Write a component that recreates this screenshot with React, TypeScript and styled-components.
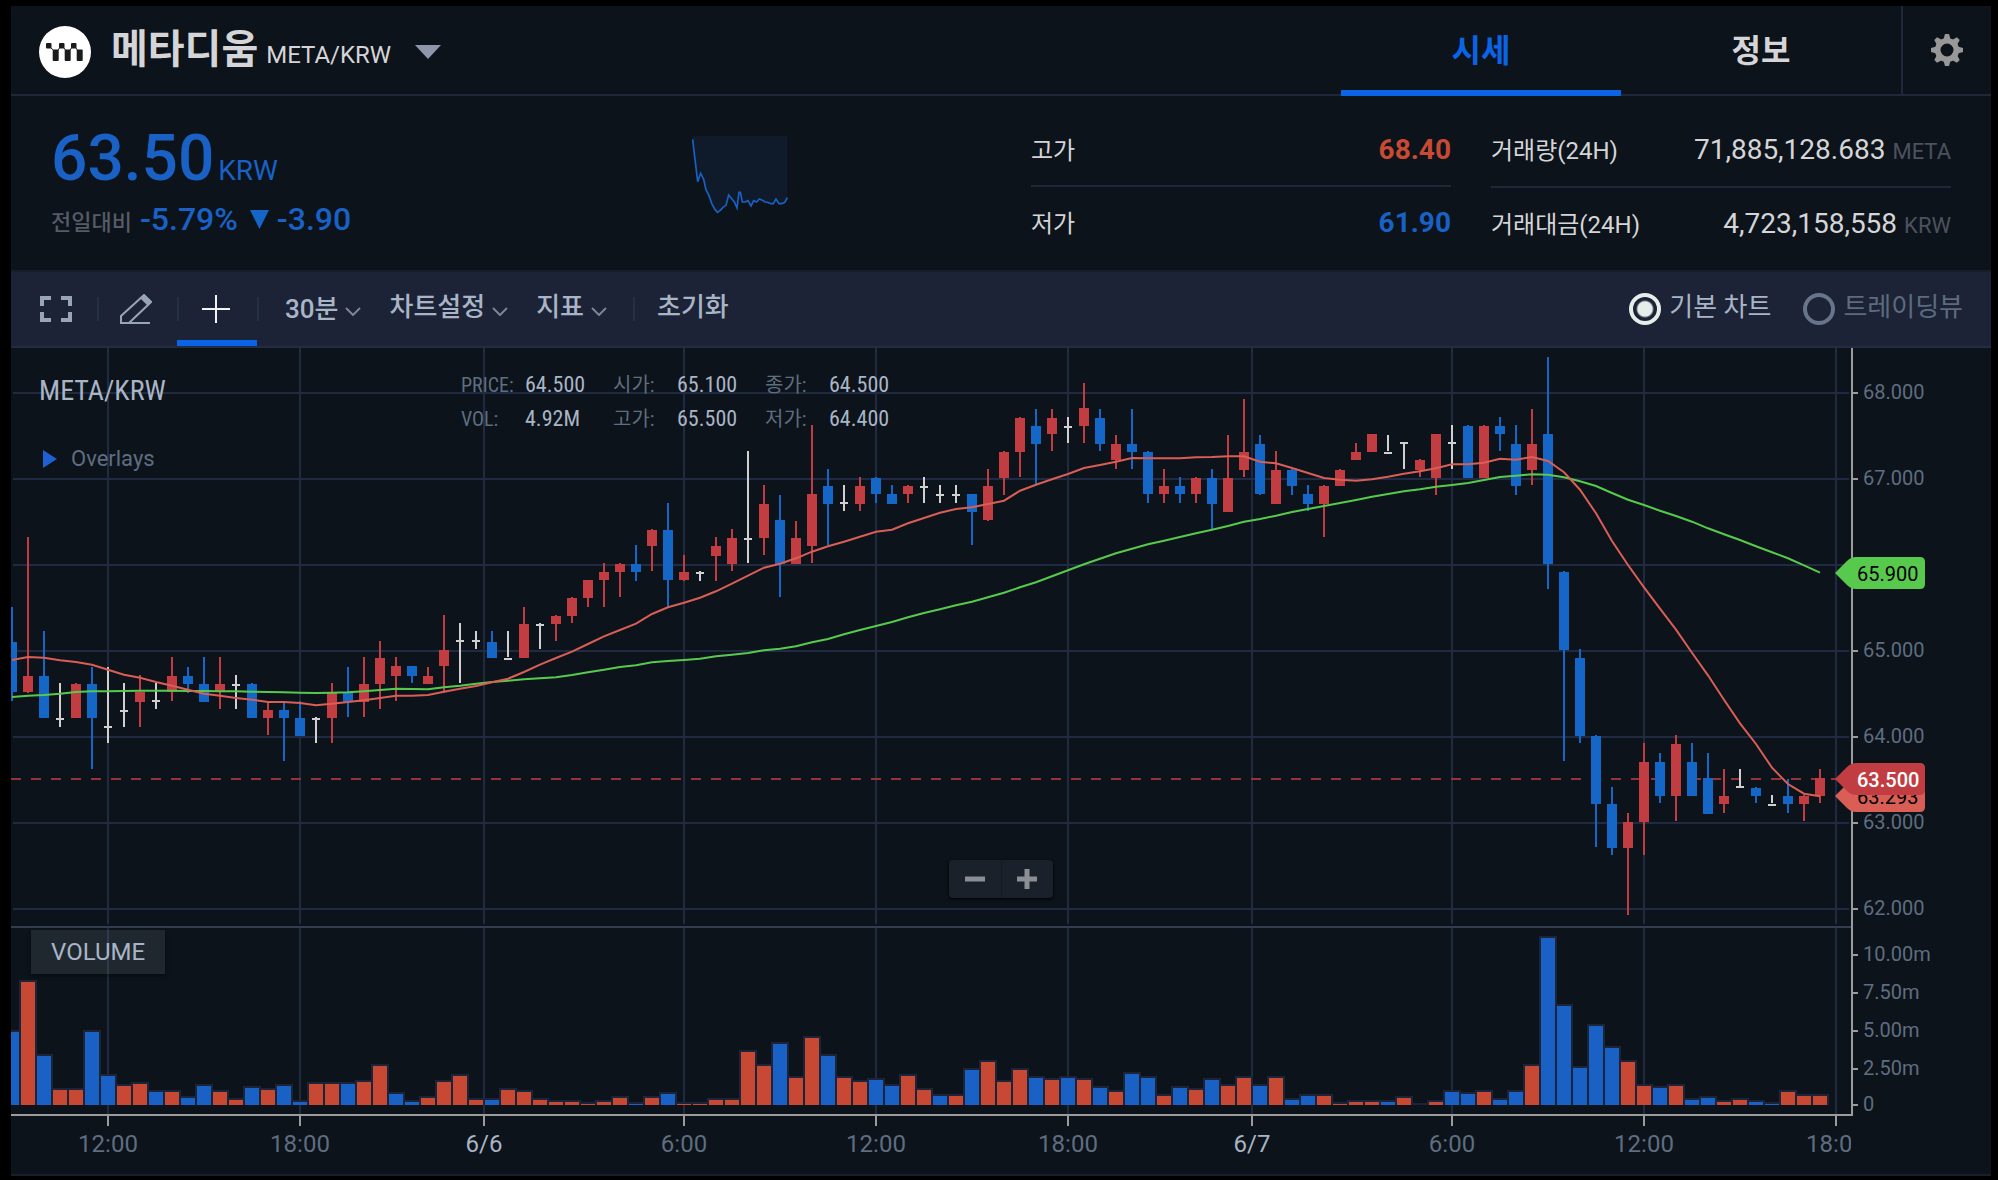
import React, { useState } from "react";
import styled, { createGlobalStyle, css } from "styled-components";

/* ---------- theme values ---------- */

const c = {
  bg: "#0c131a",
  bar: "#1c2336",
  line: "#1f273a",
  grid: "#202a42",
  axis: "#9b9b9b",
  light: "#d5d5d8",
  tool: "#a9b5c6",
  muted: "#5f6d80",
  dim: "#4c525e",
  blue: "#1961c5",
  accent: "#0b64e5",
  red: "#c84a32",
  candleUp: "#c13d42",
  candleDown: "#1466c7",
  doji: "#d0d0d0",
  maFast: "#d95e56",
  maSlow: "#57ca4e",
};

const sans = `Roboto, "Noto Sans CJK KR", sans-serif`;
const condensed = `"Roboto Condensed", Roboto, "Noto Sans CJK KR", sans-serif`;

const GlobalStyle = createGlobalStyle`
  * { box-sizing: border-box; }
  body { margin: 0; background: #000; font-family: ${sans}; color: ${c.light}; }
  h1, h2, p, dl, dd, dt { margin: 0; font-weight: 400; }
  button, select { background: none; border: 0; padding: 0; margin: 0; color: inherit; font: inherit; cursor: pointer; }
`;

/* ---------- market data ---------- */

type Kind = "r" | "b" | "w";
// kind, high, body top, body bottom, low: tenths of KRW above 60
type Candle = [Kind, number, number, number, number];

const candles: Candle[] = [
  ["b", 55, 51, 45, 44], ["r", 63, 47, 45, 45], ["b", 52, 47, 42, 42], ["w", 46, 42, 42, 41],
  ["r", 46, 46, 42, 42], ["b", 48, 46, 42, 36], ["w", 48, 41, 41, 39], ["w", 46, 43, 43, 41],
  ["r", 47, 45, 44, 41], ["w", 46, 44, 44, 43], ["r", 49, 47, 45, 44], ["b", 48, 47, 46, 45],
  ["b", 49, 46, 44, 44], ["r", 49, 46, 45, 43], ["w", 47, 46, 46, 43], ["b", 46, 46, 42, 42],
  ["r", 44, 43, 42, 40], ["b", 44, 43, 42, 37], ["b", 44, 42, 40, 40], ["w", 42, 42, 42, 39],
  ["r", 46, 45, 42, 39], ["b", 48, 45, 44, 42], ["r", 49, 46, 44, 42], ["r", 51, 49, 46, 43],
  ["r", 49, 48, 47, 44], ["b", 48, 48, 47, 46], ["r", 48, 47, 46, 46], ["r", 54, 50, 48, 45],
  ["w", 53, 51, 51, 46], ["w", 52, 51, 51, 50], ["b", 52, 51, 49, 49], ["w", 52, 49, 49, 49],
  ["r", 55, 53, 49, 49], ["w", 53, 53, 53, 50], ["r", 54, 54, 53, 51], ["r", 56, 56, 54, 53],
  ["r", 58, 58, 56, 55], ["r", 60, 59, 58, 55], ["r", 60, 60, 59, 56], ["b", 62, 60, 59, 58],
  ["r", 64, 64, 62, 59], ["b", 67, 64, 58, 55], ["r", 61, 59, 58, 58], ["w", 59, 59, 59, 58],
  ["r", 63, 62, 61, 58], ["r", 64, 63, 60, 59], ["w", 73, 63, 63, 60], ["r", 69, 67, 63, 61],
  ["b", 68, 65, 60, 56], ["r", 65, 63, 60, 60], ["r", 76, 68, 62, 60], ["b", 71, 69, 67, 62],
  ["w", 69, 67, 67, 66], ["r", 70, 69, 67, 66], ["b", 70, 70, 68, 67], ["b", 69, 68, 67, 67],
  ["r", 69, 69, 68, 67], ["w", 70, 69, 69, 67], ["w", 69, 68, 68, 67], ["w", 69, 68, 68, 67],
  ["b", 68, 68, 66, 62], ["r", 71, 69, 65, 65], ["r", 73, 73, 70, 68], ["r", 77, 77, 73, 70],
  ["b", 78, 76, 74, 69], ["r", 78, 77, 75, 73], ["w", 77, 76, 76, 74], ["r", 81, 78, 76, 74],
  ["b", 78, 77, 74, 73], ["r", 75, 74, 72, 71], ["b", 78, 74, 73, 71], ["b", 73, 73, 68, 67],
  ["r", 71, 69, 68, 67], ["b", 70, 69, 68, 67], ["r", 70, 70, 68, 67], ["b", 71, 70, 67, 64],
  ["r", 75, 70, 66, 66], ["r", 79, 73, 71, 70], ["b", 75, 74, 68, 68], ["r", 73, 71, 67, 67],
  ["b", 71, 71, 69, 68], ["b", 69, 68, 67, 66], ["r", 69, 69, 67, 63], ["r", 71, 71, 69, 69],
  ["r", 74, 73, 72, 72], ["r", 75, 75, 73, 73], ["w", 75, 73, 73, 73], ["w", 74, 74, 74, 71],
  ["r", 72, 72, 71, 70], ["r", 75, 75, 70, 68], ["w", 76, 74, 74, 71], ["b", 76, 76, 70, 70],
  ["r", 76, 76, 70, 70], ["b", 77, 76, 75, 73], ["b", 76, 74, 69, 68], ["r", 78, 74, 71, 69],
  ["b", 84, 75, 60, 57], ["b", 59, 59, 50, 37], ["b", 50, 49, 40, 39], ["b", 40, 40, 32, 27],
  ["b", 34, 32, 27, 26], ["r", 31, 30, 27, 19], ["r", 39, 37, 30, 26], ["b", 38, 37, 33, 32],
  ["r", 40, 39, 33, 30], ["b", 39, 37, 33, 33], ["b", 38, 35, 31, 31], ["r", 36, 33, 32, 31],
  ["w", 36, 34, 34, 34], ["b", 34, 34, 33, 32], ["w", 33, 32, 32, 32], ["b", 35, 33, 32, 31],
  ["r", 33, 33, 32, 30], ["r", 36, 35, 33, 32],
];

// Moving averages, one sample per candle, in thirds of a pixel
const fastAverage = [
  960, 951, 953, 961, 966, 974, 989, 1004, 1013, 1026, 1037, 1049, 1061, 1067, 1074, 1079, 1086, 1086,
  1089, 1096, 1091, 1086, 1081, 1074, 1067, 1067, 1065, 1055, 1046, 1038, 1027, 1016, 996, 974, 954, 935,
  912, 889, 870, 851, 822, 802, 788, 773, 754, 731, 707, 683, 671, 655, 635, 619, 605, 590, 575, 569, 550,
  534, 518, 507, 502, 492, 482, 452, 434, 418, 402, 384, 375, 365, 354, 355, 355, 355, 352, 351, 349, 349,
  365, 370, 384, 399, 414, 419, 422, 418, 410, 401, 394, 385, 373, 373, 368, 356, 359, 351, 363, 397, 449,
  520, 603, 675, 742, 806, 869, 938, 1006, 1079, 1150, 1212, 1283, 1332, 1361, 1369,
];
const slowAverage = [
  1071, 1067, 1065, 1061, 1056, 1054, 1054, 1053, 1052, 1052, 1052, 1053, 1053, 1054, 1054, 1055, 1056,
  1057, 1058, 1059, 1058, 1057, 1054, 1050, 1046, 1047, 1048, 1042, 1037, 1031, 1026, 1022, 1018, 1015,
  1012, 1005, 997, 989, 981, 976, 967, 963, 960, 956, 949, 944, 939, 931, 926, 919, 907, 897, 883, 870,
  858, 846, 832, 819, 808, 796, 785, 772, 758, 742, 727, 709, 691, 673, 656, 640, 626, 613, 602, 591, 580,
  569, 558, 545, 537, 527, 516, 507, 498, 489, 480, 470, 462, 454, 448, 440, 435, 429, 420, 411, 407, 403,
  404, 412, 424, 438, 459, 479, 495, 512, 528, 545, 565, 583, 600, 619, 637, 655, 676, 698,
];

const volumes = [
  73, 123, 49, 15, 15, 73, 29, 19, 21, 13, 13, 7, 19, 13, 5, 17, 15, 19, 3, 21, 21, 21, 23, 39, 11, 3, 7,
  23, 29, 5, 5, 15, 13, 5, 3, 3, 1, 3, 7, 1, 7, 11, 1, 1, 5, 5, 53, 39, 61, 27, 67, 49, 27, 23, 25, 19,
  29, 15, 9, 9, 35, 43, 23, 35, 27, 25, 27, 25, 17, 13, 31, 27, 9, 17, 15, 25, 19, 27, 19, 27, 5, 9, 9, 1,
  3, 3, 3, 7, 0, 3, 13, 11, 13, 5, 13, 39, 167, 99, 37, 79, 57, 43, 19, 17, 19, 5, 7, 3, 5, 3, 1, 13, 9, 9,
];

const volumeDown = new Set([
  0, 2, 5, 6, 9, 11, 12, 15, 17, 18, 21, 24, 25, 30, 39, 41, 48, 51, 54, 55, 58, 60, 64, 66, 68, 70, 71,
  73, 75, 78, 80, 81, 86, 90, 91, 93, 94, 96, 97, 98, 99, 100, 103, 105, 106, 109, 110,
]);

const times: [number, string, boolean?][] = [
  [97, "12:00"], [289, "18:00"], [473, "6/6", true], [673, "6:00"], [865, "12:00"],
  [1057, "18:00"], [1241, "6/7", true], [1441, "6:00"], [1633, "12:00"], [1825, "18:00"],
];

/* ---------- chart scales ---------- */

const PLOT_W = 1840;
const CHART_H = 826;
const PANE_SPLIT = 579;
const VOLUME_ZERO = 757;
const TIME_AXIS = 767;

const xOf = (i: number) => 1 + i * 16;
const yOf = (tenths: number) => 303 - (tenths - 50) * 8.6;
const snap = (y: number) => 2 * Math.round(y / 2);
const snapDown = (y: number) => 2 * Math.floor(y / 2);
const averagePoints = (list: number[]) => list.map((v, i) => `${xOf(i)},${(v / 3 - 8).toFixed(1)}`).join(" ");

/* ---------- frame and header ---------- */

const Page = styled.div`
  padding: 6px 7px 4px 11px;
`;

const Frame = styled.main`
  background: ${c.bg};
  border-bottom: 2px solid #171f2d;
`;

const Header = styled.header`
  display: flex;
  height: 90px;
  border-bottom: 2px solid ${c.line};
`;

const Brand = styled.div`
  flex: 1;
  display: flex;
  align-items: center;
  padding: 4px 0 0 28px;
`;

const Pair = styled.button`
  display: flex;
  align-items: baseline;
  gap: 8px;
  margin-left: 20px;
  line-height: 56px;
`;

const CoinName = styled.span`
  font-size: 40px;
  font-weight: 700;
`;

const Symbol = styled.span`
  font-size: 24px;
`;

const PairArrow = styled.svg`
  margin-left: 16px;
  align-self: center;
`;

const Tab = styled.button<{ $active?: boolean }>`
  width: 280px;
  margin-bottom: -2px;
  padding-bottom: 6px;
  font-size: 32px;
  font-weight: 700;
  color: ${(p) => (p.$active ? c.accent : c.light)};
  ${(p) => p.$active && css`box-shadow: inset 0 -6px ${c.accent};`}
`;

const Settings = styled.button`
  width: 90px;
  border-left: 2px solid ${c.line};
  display: grid;
  place-items: center;
`;

/* ---------- price summary ---------- */

const Summary = styled.section`
  display: grid;
  grid-template-columns: 681fr 339fr 460fr 500fr;
  height: 176px;
  border-bottom: 2px solid #171e2b;
`;

const PriceBlock = styled.div`
  padding: 31px 0 0 40px;
  color: ${c.blue};
`;

const Price = styled.p`
  display: flex;
  align-items: baseline;
  gap: 4px;
  font-size: 64px;
  line-height: 64px;
  font-weight: 500;
`;

const PriceUnit = styled.span`
  font-size: 28px;
  line-height: 28px;
  font-weight: 400;
`;

const Change = styled.p`
  display: flex;
  align-items: baseline;
  gap: 8px;
  margin-top: 8px;
  font-size: 32px;
  line-height: 40px;
  font-weight: 500;
`;

const ChangeLabel = styled.span`
  font-size: 22px;
  line-height: 28px;
  color: #555b67;
`;

const SparkBox = styled.div`
  padding-top: 40px;
`;

const Stats = styled.dl`
  padding: 18px 40px 0 0;
`;

const Stat = styled.div`
  display: flex;
  justify-content: space-between;
  align-items: baseline;
  padding: 22px 0 20px;
  line-height: 28px;
  & + & {
    border-top: 2px solid ${c.line};
  }
`;

const StatName = styled.dt`
  font-size: 24px;
`;

const StatValue = styled.dd<{ $color?: string }>`
  font-size: 28px;
  font-weight: ${(p) => (p.$color ? 700 : 400)};
  color: ${(p) => p.$color ?? c.light};
`;

const StatUnit = styled.span`
  margin-left: 7px;
  font-size: 22px;
  font-weight: 400;
  color: ${c.dim};
`;

/* ---------- toolbar ---------- */

const Toolbar = styled.div`
  display: flex;
  align-items: center;
  height: 76px;
  padding-right: 28px;
  background: ${c.bar};
  border-bottom: 2px solid #232c42;
  font-size: 26px;
  line-height: 40px;
  color: ${c.tool};
`;

const Tool = styled.button<{ $active?: boolean }>`
  align-self: stretch;
  width: 78px;
  padding-right: 4px;
  display: grid;
  place-items: center;
  &:first-child {
    width: 86px;
    padding: 0 0 0 4px;
  }
  ${(p) =>
    p.$active &&
    css`
      width: 80px;
      margin-left: -2px;
      padding-right: 2px;
      box-shadow: inset 0 -6px ${c.accent};
    `}
`;

const Divider = styled.span`
  width: 2px;
  height: 24px;
  background: #243044;
`;

const Menus = styled.div`
  display: flex;
  align-items: center;
  gap: 28px;
  margin: 0 26px;
`;

const Menu = styled.span`
  display: flex;
  align-items: center;
  gap: 7px;
`;

const MenuButton = styled.button`
  display: flex;
  align-items: center;
  gap: 7px;
  font-weight: 500;
`;

const Caption = styled.span`
  padding-bottom: 4px;
`;

const Interval = styled.select`
  appearance: none;
  field-sizing: content;
  font-weight: 500;
  outline: 0;
`;

const Arrow = styled.svg`
  margin-top: 4px;
`;

const Reset = styled.button`
  margin-left: 22px;
  padding-bottom: 4px;
  font-weight: 500;
`;

const ChartKinds = styled.fieldset`
  display: flex;
  gap: 32px;
  margin: 0 0 0 auto;
  padding: 0;
  border: 0;
`;

const KindLabel = styled.label<{ $on: boolean }>`
  display: flex;
  align-items: center;
  gap: 8px;
  color: ${(p) => (p.$on ? c.tool : "#5d6b7d")};
`;

const Radio = styled.input`
  appearance: none;
  width: 32px;
  height: 32px;
  margin: 0;
  border: 4px solid #66758a;
  border-radius: 50%;
  &:checked {
    border-color: #e6eeea;
    background: radial-gradient(circle, #e6eeea 7px, transparent 9px);
  }
`;

/* ---------- chart ---------- */

const Chart = styled.section`
  position: relative;
  display: flex;
`;

const PlotBox = styled.div`
  flex: 1;
  min-width: 0;
  display: flex;
  justify-content: flex-end;
  overflow: hidden;
`;

const Drawing = styled.svg`
  display: block;
  flex: none;
  overflow: hidden;
  font-family: ${sans};
`;

const AxisDrawing = styled(Drawing)`
  overflow: visible;
  position: relative;
`;

const Legend = styled.div`
  position: absolute;
  left: 28px;
  top: 27px;
`;

const LegendTitle = styled.h2`
  font-family: ${condensed};
  font-size: 28px;
  line-height: 32px;
  color: ${c.tool};
`;

const Overlays = styled.button`
  display: flex;
  align-items: center;
  gap: 14px;
  margin: 38px 0 0 4px;
  font-size: 22px;
  line-height: 28px;
  color: ${c.muted};
`;

const Quote = styled.dl`
  position: absolute;
  left: 450px;
  top: 20px;
  display: grid;
  grid-template-columns: repeat(3, 64px 88px);
  line-height: 34px;
  font-size: 22px;
  font-family: ${condensed};
`;

const QuoteName = styled.dt`
  font-size: 20px;
  color: ${c.muted};
`;

const QuoteValue = styled.dd`
  color: ${c.tool};
`;

const PaneTag = styled.h2`
  position: absolute;
  left: 20px;
  top: 582px;
  padding: 0 20px;
  font-size: 24px;
  line-height: 44px;
  color: ${c.tool};
  background: rgba(110, 125, 135, 0.2);
  box-shadow: 0 2px 4px rgba(0, 0, 0, 0.4);
`;

const Zoom = styled.div`
  position: absolute;
  left: 50%;
  top: 512px;
  transform: translateX(-50%);
  display: flex;
  border-radius: 4px;
  background: #1b212b;
  box-shadow: 0 1px 3px #000;
`;

const ZoomButton = styled.button`
  width: 52px;
  height: 38px;
  display: grid;
  place-items: center;
  & + & {
    border-left: 1px solid #151b25;
    padding-right: 2px;
  }
`;

/* ---------- drawings ---------- */

const Logo = () => (
  <svg width="52" height="52" viewBox="0 0 52 52" aria-hidden="true">
    <circle cx="26" cy="26" r="26" fill="#fff" />
    <g fill="#1b1a1c">
      {[7, 20, 32].map((x) => (
        <rect key={x} x={x} y="17" width="5.500" height="5.500" rx="1" />
      ))}
      {[13.7, 25.7, 37.7].map((x) => (
        <rect key={x} x={x} y="23.500" width="6" height="11.500" rx="1" />
      ))}
    </g>
    <path
      d="M12 22L14.500 24.200M25 22L26.500 24.200M37 22L38.500 24.200M19 24L20.500 22M31.200 24L32.500 22"
      stroke="#1b1a1c"
      strokeWidth="1"
    />
  </svg>
);

const Gear = () => (
  <svg width="32" height="32" viewBox="-16 -16 32 32" aria-hidden="true">
    <g fill="#989898">
      {[0, 45, 90, 135, 180, 225, 270, 315].map((a) => (
        <path key={a} d="M-4 -9L-2 -16H2L4 -9Z" transform={`rotate(${a})`} />
      ))}
    </g>
    <circle r="9.300" fill="none" stroke="#989898" strokeWidth="5.600" />
  </svg>
);

const Fullscreen = () => (
  <svg width="32" height="26" viewBox="0 0 32 26" fill="none" stroke="#98a5b4" strokeWidth="4" aria-hidden="true">
    <path d="M11 2H2V10M21 2H30V10M2 16V24H11M30 16V24H21" />
  </svg>
);

const Pencil = () => (
  <svg width="32" height="30" viewBox="0 0 32 30" aria-hidden="true">
    <path d="M1 29V22L24 1L31 8L9 29M0 29H30" fill="none" stroke="#98a5b4" strokeWidth="2" />
    <path d="M20.500 4.500L24.500 0.500L32 7.500L27.500 11.500Z" fill="#98a5b4" />
  </svg>
);

const Cross = () => (
  <svg width="28" height="28" viewBox="0 0 28 28" stroke="#f2f4f6" strokeWidth="2" aria-hidden="true">
    <path d="M14 0V28M0 14H28" />
  </svg>
);

const Caret = () => (
  <Arrow width="16" height="9" viewBox="0 0 16 9" fill="none" stroke="#7c8593" strokeWidth="2" aria-hidden="true">
    <path d="M1 1L8 8L15 1" />
  </Arrow>
);

const sparkLine =
  "578,418 584,470 593,545 602,520 611,538 618,570 627,587 635,610 644,627 652,637 660,632 669,622 678,616 686,585 695,596 703,606 711,624 717,577 721,577 727,606 736,606 744,602 753,618 761,602 770,606 778,597 787,601 795,606 803,607 812,611 820,611 828,597 837,611 846,611 854,607 862,593";

const Spark = () => (
  <svg width="96" height="78" viewBox="576 408 288 234" role="img" aria-label="24H">
    <polygon points={`576,408 ${sparkLine} 862,408`} fill="#0f1b2a" />
    <polyline points={sparkLine} fill="none" stroke={c.blue} strokeWidth="5" />
  </svg>
);

const CandleShape = ({ data, x }: { data: Candle; x: number }) => {
  const [kind, high, top, bottom, low] = data;
  const color = kind === "r" ? c.candleUp : kind === "b" ? c.candleDown : c.doji;
  const wickTop = snapDown(yOf(high)) - 1;
  const wickBottom = snapDown(yOf(low)) - 1;
  const bodyTop = snap(yOf(top) - 1.4);
  return (
    <g fill={color}>
      <rect x={x - 1} y={wickTop} width="2" height={Math.max(0, wickBottom - wickTop)} />
      {kind === "w" ? (
        <rect x={x - 4} y={snap(yOf(top)) - 2} width="8" height="2" />
      ) : (
        <rect x={x - 5} y={bodyTop} width="10" height={snap(yOf(bottom) - 1.4) - bodyTop} />
      )}
    </g>
  );
};

const Plot = () => (
  <Drawing width={PLOT_W} height={CHART_H} role="img" aria-label="META/KRW">
    <g fill={c.grid}>
      {[80, 70, 60, 50, 40, 30, 20].map((p) => (
        <rect key={p} x="2" y={yOf(p) - 1} width={PLOT_W - 4} height="2" />
      ))}
      {times.map(([x]) => (
        <React.Fragment key={x}>
          <rect x={x - 1} y="0" width="2" height="576" />
          <rect x={x - 1} y="580" width="2" height="186" />
        </React.Fragment>
      ))}
    </g>
    <line x1="0" x2="1826" y1="431" y2="431" stroke="#93343a" strokeWidth="2" strokeDasharray="10 10" />
    {candles.map((d, i) => (
      <CandleShape key={i} data={d} x={xOf(i)} />
    ))}
    <polyline points={averagePoints(slowAverage)} fill="none" stroke={c.maSlow} strokeWidth="2" />
    <polyline points={averagePoints(fastAverage)} fill="none" stroke={c.maFast} strokeWidth="2" />
    <rect x="0" y={PANE_SPLIT - 1} width={PLOT_W} height="2" fill="#333d50" />
    {volumes.map((v, i) => (
      <rect key={i} x={xOf(i) - 9} y={VOLUME_ZERO - v - 2} width="18" height={v + 2} fill="#1b2439" />
    ))}
    {volumes.map((v, i) => (
      <rect
        key={i}
        x={xOf(i) - 7}
        y={VOLUME_ZERO - v}
        width="14"
        height={v}
        fill={volumeDown.has(i) ? "#1a61c6" : "#c74833"}
      />
    ))}
    <rect x="0" y={TIME_AXIS - 1} width={PLOT_W} height="2" fill={c.axis} />
    {times.map(([x, text, day]) => (
      <g key={x}>
        <rect x={x - 1} y={TIME_AXIS} width="2" height="11" fill={c.axis} />
        <text x={x} y="804" textAnchor="middle" fontSize="24" fill={day ? c.tool : c.muted}>
          {text}
        </text>
      </g>
    ))}
  </Drawing>
);

const Flag = ({ y, color, text, ink, weight }: { y: number; color: string; text: string; ink: string; weight: number }) => (
  <g transform={`translate(-16 ${y})`}>
    <path d="M0 0L12 -12Q16 -16 21 -16H85Q90 -16 90 -11V11Q90 16 85 16H21Q16 16 12 12Z" fill={color} />
    <text x="22" y="8" fontSize="20" fontWeight={weight} fill={ink}>
      {text}
    </text>
  </g>
);

const priceTicks: [number, string][] = [
  [80, "68.000"], [70, "67.000"], [50, "65.000"], [40, "64.000"], [30, "63.000"], [20, "62.000"],
];
const volumeTicks: [number, string][] = [
  [607, "10.00m"], [645, "7.50m"], [683, "5.00m"], [721, "2.50m"], [757, "0"],
];

const PriceAxis = () => (
  <AxisDrawing width="140" height={CHART_H} role="img" aria-label="KRW">
    <rect x="0" y="0" width="2" height="768" fill={c.axis} />
    {[...priceTicks.map(([p, t]) => [yOf(p), t] as [number, string]), ...volumeTicks].map(([y, t]) => (
      <g key={t}>
        <rect x="2" y={y - 1} width="5" height="2" fill={c.axis} />
        <text x="12" y={y + 6} fontSize="20" fill={c.muted}>
          {t}
        </text>
      </g>
    ))}
    <Flag y={225} color={c.maSlow} text="65.900" ink="#000" weight={400} />
    <Flag y={448} color={c.maFast} text="63.293" ink="#000" weight={400} />
    <Flag y={431} color={c.candleUp} text="63.500" ink="#fff" weight={500} />
  </AxisDrawing>
);

/* ---------- page ---------- */

const quotes = [
  ["PRICE:", "64.500"], ["시가:", "65.100"], ["종가:", "64.500"],
  ["VOL:", "4.92M"], ["고가:", "65.500"], ["저가:", "64.400"],
];

export default function App() {
  const [tab, setTab] = useState("시세");
  const [kind, setKind] = useState("기본 차트");

  return (
    <Page>
      <GlobalStyle />
      <Frame>
        <Header>
          <Brand>
            <Logo />
            <h1>
              <Pair aria-haspopup="listbox">
                <CoinName>메타디움</CoinName>
                <Symbol>META/KRW</Symbol>
                <PairArrow width="26" height="14" viewBox="0 0 26 14" aria-hidden="true">
                  <path d="M0 0H26L13 14Z" fill="#8e96ab" />
                </PairArrow>
              </Pair>
            </h1>
          </Brand>
          {["시세", "정보"].map((t) => (
            <Tab key={t} $active={t === tab} onClick={() => setTab(t)}>
              {t}
            </Tab>
          ))}
          <Settings aria-label="설정">
            <Gear />
          </Settings>
        </Header>

        <Summary>
          <PriceBlock>
            <Price>
              63.50<PriceUnit>KRW</PriceUnit>
            </Price>
            <Change>
              <ChangeLabel>전일대비</ChangeLabel>
              <span>-5.79%</span>
              <svg width="23" height="20" viewBox="0 0 23 20" aria-hidden="true">
                <path d="M4 0H23L13.500 19Z" fill={c.candleDown} />
              </svg>
              <span>-3.90</span>
            </Change>
          </PriceBlock>
          <SparkBox>
            <Spark />
          </SparkBox>
          <Stats>
            <Stat>
              <StatName>고가</StatName>
              <StatValue $color={c.red}>68.40</StatValue>
            </Stat>
            <Stat>
              <StatName>저가</StatName>
              <StatValue $color={c.blue}>61.90</StatValue>
            </Stat>
          </Stats>
          <Stats>
            <Stat>
              <StatName>거래량(24H)</StatName>
              <StatValue>
                71,885,128.683<StatUnit>META</StatUnit>
              </StatValue>
            </Stat>
            <Stat>
              <StatName>거래대금(24H)</StatName>
              <StatValue>
                4,723,158,558<StatUnit>KRW</StatUnit>
              </StatValue>
            </Stat>
          </Stats>
        </Summary>

        <Toolbar>
          <Tool aria-label="전체화면">
            <Fullscreen />
          </Tool>
          <Divider />
          <Tool aria-label="그리기">
            <Pencil />
          </Tool>
          <Divider />
          <Tool $active aria-label="십자선">
            <Cross />
          </Tool>
          <Divider />
          <Menus>
            <Menu>
              <Interval aria-label="간격" defaultValue="30분">
                <option>30분</option>
              </Interval>
              <Caret />
            </Menu>
            {["차트설정", "지표"].map((m) => (
              <MenuButton key={m} aria-haspopup="menu">
                <Caption>{m}</Caption>
                <Caret />
              </MenuButton>
            ))}
          </Menus>
          <Divider />
          <Reset>초기화</Reset>
          <ChartKinds>
            {["기본 차트", "트레이딩뷰"].map((k) => (
              <KindLabel key={k} $on={k === kind}>
                <Radio type="radio" name="chart-kind" checked={k === kind} onChange={() => setKind(k)} />
                <Caption>{k}</Caption>
              </KindLabel>
            ))}
          </ChartKinds>
        </Toolbar>

        <Chart>
          <PlotBox>
            <Plot />
          </PlotBox>
          <PriceAxis />
          <Legend>
            <LegendTitle>META/KRW</LegendTitle>
            <Overlays>
              <svg width="14" height="18" viewBox="0 0 14 18" aria-hidden="true">
                <path d="M0 0L14 9L0 18Z" fill="#1f60d3" />
              </svg>
              Overlays
            </Overlays>
          </Legend>
          <Quote>
            {quotes.map(([name, value]) => (
              <React.Fragment key={name}>
                <QuoteName>{name}</QuoteName>
                <QuoteValue>{value}</QuoteValue>
              </React.Fragment>
            ))}
          </Quote>
          <PaneTag>VOLUME</PaneTag>
          <Zoom>
            <ZoomButton aria-label="축소">
              <svg width="20" height="20" viewBox="0 0 20 20" aria-hidden="true">
                <path d="M0 10H20" stroke="#8b8e92" strokeWidth="5" />
              </svg>
            </ZoomButton>
            <ZoomButton aria-label="확대">
              <svg width="20" height="20" viewBox="0 0 20 20" aria-hidden="true">
                <path d="M0 10H20M10 0V20" stroke="#8b8e92" strokeWidth="5" />
              </svg>
            </ZoomButton>
          </Zoom>
        </Chart>
      </Frame>
    </Page>
  );
}
